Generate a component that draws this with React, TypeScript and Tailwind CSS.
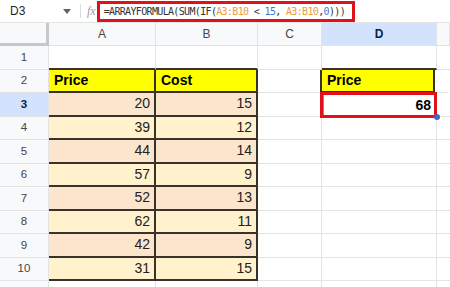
import React from 'react';

const cols = [
    { key: 'A', w: 107 },
    { key: 'B', w: 102 },
    { key: 'C', w: 64 },
    { key: 'D', w: 115 },
    { key: '', w: 13 },
] as const;

const data: Array<[number, number]> = [
    [20, 15],
    [39, 12],
    [44, 14],
    [57, 9],
    [52, 13],
    [62, 11],
    [42, 9],
    [31, 15],
];

const dark = 'border-[#3a3128]';
const light = 'border-[#e2e3e3]';

function cx(...classes: Array<string | false | null | undefined>) {
    return classes.filter(Boolean).join(' ');
}

function RowHeader({ n, active }: { n: number; active?: boolean }) {
    return (
        <div
            className={cx(
                'w-[49px] shrink-0 h-full flex items-center justify-center border-r border-b text-[11.5px]',
                light,
                active ? 'bg-[#d3e3fd] font-bold text-[#0b1f44]' : 'bg-[#f8f9fa] text-[#444746]'
            )}
        >
            {n}
        </div>
    );
}

export default function App() {
    return (
        <div className="w-[450px] h-[287px] overflow-hidden bg-white text-[#1f1f1f]" style={{ fontFamily: '"Liberation Sans", Arial, sans-serif' }}>
            {/* formula bar */}
            <div className="h-[23px] flex items-center border-b border-[#e2e3e3]">
                <div className="w-[60px] pl-[10px] text-[12px] text-[#1f1f1f]">D3</div>
                <svg width="8" height="5" viewBox="0 0 8 5" className="ml-[3px]">
                    <path d="M0 0h8L4 5z" fill="#5f6368" />
                </svg>
                <div className="ml-[9px] w-px h-[14px] bg-[#dadce0]" />
                <div className="ml-[6px] text-[12px] italic text-[#9aa0a6]" style={{ fontFamily: '"Liberation Serif", serif' }}>
                    fx
                </div>
                <div
                    className="ml-[1px] h-[21px] w-[258px] border-[3px] border-[#e0111b] flex items-center pl-[4px] text-[10px] tracking-[-0.66px] whitespace-pre"
                    style={{ fontFamily: '"DejaVu Sans Mono", monospace' }}
                >
                    <span className="text-[#333]">=ARRAYFORMULA(SUM(IF(</span>
                    <span className="text-[#ec9a3c]">A3:B10</span>
                    <span className="text-[#333]">{' < '}</span>
                    <span className="text-[#3f78d6]">15</span>
                    <span className="text-[#333]">{', '}</span>
                    <span className="text-[#ec9a3c]">A3:B10</span>
                    <span className="text-[#333]">,</span>
                    <span className="text-[#3f78d6]">0</span>
                    <span className="text-[#333]">)))</span>
                </div>
            </div>

            {/* column headers */}
            <div className="h-[23px] flex">
                <div className="w-[49px] shrink-0 h-full bg-[#f8f9fa] border-r-[3px] border-b-[3px] border-[#c7c7c7]" />
                {cols.map((c, i) => (
                    <div
                        key={i}
                        style={{ width: c.w }}
                        className={cx(
                            'shrink-0 h-full flex items-center justify-center border-r border-b text-[12px]',
                            light,
                            c.key === 'D' ? 'bg-[#d3e3fd] font-bold text-[#0b1f44]' : 'bg-[#f8f9fa] text-[#444746]'
                        )}
                    >
                        {c.key}
                    </div>
                ))}
            </div>

            {/* row 1 */}
            <div className="h-[24px] flex">
                <RowHeader n={1} />
                <div className={cx('w-[107px] shrink-0 border-r border-b-2', light, 'border-b-[#3a3128]')} />
                <div className={cx('w-[102px] shrink-0 border-r border-b-2', light, 'border-b-[#3a3128]')} />
                <div className={cx('w-[64px] shrink-0 border-r border-b', light)} />
                <div className={cx('w-[115px] shrink-0 border-r border-b-2', light, 'border-b-[#3a3128]')} />
                <div className={cx('w-[13px] shrink-0 border-b', light)} />
            </div>

            {/* row 2 */}
            <div className="h-[23px] flex">
                <RowHeader n={2} />
                <div className={cx('w-[107px] shrink-0 bg-[#ffff00] border-r-2 border-b-2 flex items-center pl-[5px] font-bold text-[14px] text-black', dark)}>
                    Price
                </div>
                <div className={cx('w-[102px] shrink-0 bg-[#ffff00] border-r-2 border-b-2 flex items-center pl-[5px] font-bold text-[14px] text-black', dark)}>
                    Cost
                </div>
                <div className={cx('w-[64px] shrink-0 border-r border-b', light)} />
                <div className={cx('w-[115px] shrink-0 -ml-[2px] bg-[#ffff00] border-2 border-t-0 flex items-center pl-[5px] font-bold text-[14px] text-black', dark)}>
                    Price
                </div>
                <div className={cx('w-[13px] shrink-0 border-b', light)} />
            </div>

            {/* rows 3-10 */}
            {data.map(([a, b], i) => {
                const n = i + 3;
                const bg = n % 2 === 1 ? 'bg-[#fce5cd]' : 'bg-[#fff2cc]';
                return (
                    <div key={n} className="h-[23.5px] flex">
                        <RowHeader n={n} active={n === 3} />
                        <div className={cx('w-[107px] shrink-0 border-r-2 border-b-2 flex items-center justify-end pr-[4px] text-[14px] text-[#222]', dark, bg)}>
                            {a}
                        </div>
                        <div className={cx('w-[102px] shrink-0 border-r-2 border-b-2 flex items-center justify-end pr-[4px] text-[14px] text-[#222]', dark, bg)}>
                            {b}
                        </div>
                        <div className={cx('w-[64px] shrink-0 border-r border-b', light)} />
                        {n === 3 ? (
                            <div className="relative w-[115px] shrink-0 border-r border-b border-[#e2e3e3]">
                                <div className="absolute -left-[2px] -top-[1px] w-[117px] h-[26px] border-[3px] border-[#e0111b] flex items-center justify-end pr-[3px] font-bold text-[14px] text-black">
                                    <div className="absolute left-0 top-0 bottom-0 w-px bg-[#6d8fd8]" />
                                    68
                                </div>
                                <div className="absolute -right-[4px] -bottom-[4px] w-[6px] h-[6px] rounded-full bg-[#4863c6]" />
                            </div>
                        ) : (
                            <div className={cx('w-[115px] shrink-0 border-r border-b', light)} />
                        )}
                        <div className={cx('w-[13px] shrink-0 border-b', light)} />
                    </div>
                );
            })}

            {/* partial row 11 */}
            <div className="h-[6px] flex">
                <div className={cx('w-[49px] shrink-0 h-full bg-[#f8f9fa] border-r', light)} />
                <div className={cx('w-[107px] shrink-0 border-r', light)} />
                <div className={cx('w-[102px] shrink-0 border-r', light)} />
                <div className={cx('w-[64px] shrink-0 border-r', light)} />
                <div className={cx('w-[115px] shrink-0 border-r', light)} />
            </div>
        </div>
    );
}
